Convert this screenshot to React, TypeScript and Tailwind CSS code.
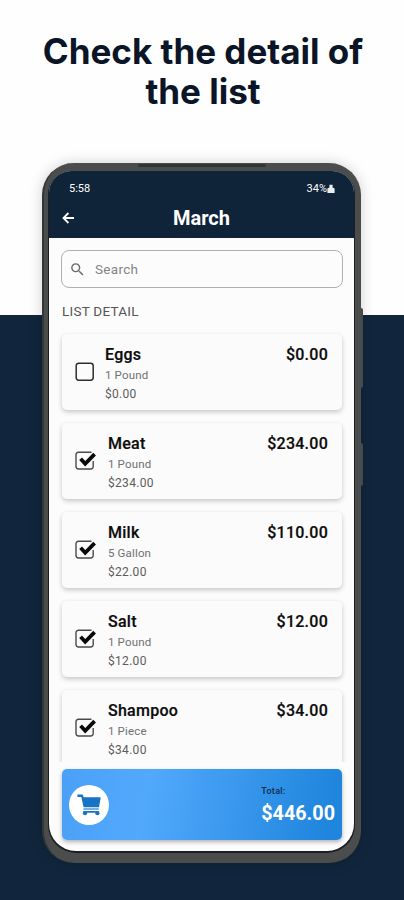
import { MdSearch } from "react-icons/md";

type Item = {
  name: string;
  quantity: string;
  price: string;
  total: string;
  checked: boolean;
};

const items: Item[] = [
  { name: "Eggs", quantity: "1 Pound", price: "$0.00", total: "$0.00", checked: false },
  { name: "Meat", quantity: "1 Pound", price: "$234.00", total: "$234.00", checked: true },
  { name: "Milk", quantity: "5 Gallon", price: "$22.00", total: "$110.00", checked: true },
  { name: "Salt", quantity: "1 Pound", price: "$12.00", total: "$12.00", checked: true },
  { name: "Shampoo", quantity: "1 Piece", price: "$34.00", total: "$34.00", checked: true },
];

function Checkbox({ checked }: { checked: boolean }) {
  return (
    <svg viewBox="0 0 22 20" className="h-[20px] w-[22px] shrink-0" fill="none">
      {checked ? (
        <>
          <path
            d="M16.5 1.2H3.4a2.4 2.4 0 0 0-2.4 2.4v12a2.4 2.4 0 0 0 2.4 2.4h12.4a2.4 2.4 0 0 0 2.4-2.4V10"
            stroke="#4a4a4a"
            strokeWidth="1.4"
          />
          <path d="M5.6 7.8l4.6 5L19.6 3.2" stroke="#0a0a0a" strokeWidth="3.8" />
        </>
      ) : (
        <rect x="1.2" y="1.2" width="17" height="17" rx="2.6" stroke="#2e2e2e" strokeWidth="1.5" />
      )}
    </svg>
  );
}

function CartIcon() {
  return (
    <svg viewBox="0 0 24 22" className="h-[22px] w-[24px]" fill="#1673c5">
      <path d="M.4.6h5.2l1.1 2.6h17L22 13.2H6.6L4.3 3H.4z" />
      <path d="M6.4 14.2h15.4v1.5H6.4z" opacity="0.75" />
      <path d="M6.4 17h15.4v1.8H6.4z" />
      <circle cx="8" cy="19.2" r="2.1" />
      <circle cx="20.4" cy="19.2" r="2.1" />
    </svg>
  );
}

function ItemCard({ item }: { item: Item }) {
  return (
    <div className="flex h-[76px] shrink-0 rounded-[5px] bg-[#fbfbfb] pl-[13px] pr-[14px] shadow-[0_2px_5px_rgba(0,0,0,0.22)]">
      <div className="flex items-center">
        <Checkbox checked={item.checked} />
      </div>
      <div className={item.checked ? "ml-[11px] pt-[10px]" : "ml-[8px] pt-[10px]"}>
        <div className="text-[16px] font-medium leading-[22px] tracking-[0.25px] text-[#0c0c0c] [-webkit-text-stroke:0.2px_#0c0c0c]">
          {item.name}
        </div>
        <div className="text-[11.5px] leading-[19px] tracking-[0.15px] text-[#707070]">{item.quantity}</div>
        <div className="text-[12px] leading-[19px] tracking-[0.3px] text-[#5c5c5c]">{item.price}</div>
      </div>
      <div className="ml-auto pt-[10px] text-[16px] font-medium leading-[22px] tracking-[0.25px] text-[#0c0c0c] [-webkit-text-stroke:0.2px_#0c0c0c]">
        {item.total}
      </div>
    </div>
  );
}

export default function App() {
  return (
    <div className="h-[900px] w-[404px] overflow-hidden bg-[linear-gradient(to_bottom,#fefefe_315px,#11263c_315px)] font-['Roboto',sans-serif]">
      <h1 className="h-[163px] pl-[2px] pt-[31px] text-center font-['Inter',sans-serif] text-[35px] font-bold leading-[40px] text-[#0a1528]">
        Check the detail of
        <br />
        the list
      </h1>

      <div className="relative ml-[42px] h-[700px] w-[319px] rounded-[32px] border-l-2 border-[#34373a] bg-[#4b4d4d] pb-[12px] pl-[5px] pr-[7px] pt-[8px] shadow-[0_0_14px_rgba(0,0,0,0.18)]">
        {/* speaker slot and side buttons */}
        <div className="absolute left-[94px] top-[1px] h-[3px] w-[128px] rounded-full bg-[#303638]" />
        <div className="absolute -right-[2px] top-[145px] h-[80px] w-[2px] rounded-r-sm bg-[#45494d]" />
        <div className="absolute -right-[2px] top-[280px] h-[43px] w-[2px] rounded-r-sm bg-[#45494d]" />

        <div className="flex h-[680px] flex-col overflow-hidden rounded-b-[27px] rounded-t-[22px] bg-[#fcfcfc] shadow-[0_1px_0_1px_#1c1f22]">
          <header className="h-[67px] shrink-0 bg-[#0f2339] text-white">
            <div className="flex h-[34px] items-center justify-between pl-[20px] pr-[19px] pt-[2px] text-[11px]">
              <span>5:58</span>
              <span className="flex items-center">
                34%
                <svg viewBox="0 0 8 10" className="h-[10px] w-[8px]" fill="#e8edf2">
                  <path d="M2.4.8h3.2v2.6l2 1.2V9H.4V4.6l2-1.2z" />
                </svg>
              </span>
            </div>
            <div className="grid h-[27px] grid-cols-[1fr_auto_1fr] items-center pl-[13px] pr-[13px]">
              <svg
                viewBox="0 0 13 12"
                className="mb-[2px] h-[12px] w-[13px]"
                fill="none"
                stroke="currentColor"
                strokeWidth="1.8"
              >
                <path d="M12 6H2M6.4 1L1.5 6l4.9 5" />
              </svg>
              <span className="text-[20px] font-bold leading-[25px]">March</span>
            </div>
          </header>

          <main className="flex min-h-0 flex-1 flex-col pl-[13px] pr-[12px] pt-[12px]">
            <div className="-ml-px flex h-[38px] w-[282px] shrink-0 items-center rounded-[8px] border border-[#b0b0b0] pl-[7px] text-[#858585]">
              <MdSearch className="size-[17px] text-[#6c6c6c]" />
              <span className="ml-[9px] text-[13.5px] tracking-[0.3px]">Search</span>
            </div>
            <div className="mt-[14px] h-[18px] shrink-0 text-[13.5px] leading-[18px] tracking-[0.25px] text-[#555]">
              LIST DETAIL
            </div>
            <div className="-mx-[6px] mt-[9px] flex h-[433px] shrink-0 flex-col gap-[13px] overflow-hidden px-[6px] pt-[5px]">
              {items.map((item) => (
                <ItemCard key={item.name} item={item} />
              ))}
            </div>
            <div className="mt-[7px] flex h-[71px] w-[280px] shrink-0 items-center rounded-[5px] bg-[linear-gradient(100deg,#4aa0f6_0%,#52a9fc_30%,#1f85dd_95%)] pl-[7px] pr-[7px] shadow-[0_2px_4px_rgba(0,0,0,0.3)]">
              <div className="flex size-[40px] items-center justify-center rounded-full bg-white">
                <CartIcon />
              </div>
              <div className="ml-auto pt-px">
                <div className="text-[9px] font-medium leading-[14px] tracking-[0.3px] text-[#0c2c4c]">Total:</div>
                <div className="mt-[4px] text-[19.75px] font-bold leading-[24px] text-white">$446.00</div>
              </div>
            </div>
          </main>
        </div>
      </div>
    </div>
  );
}
